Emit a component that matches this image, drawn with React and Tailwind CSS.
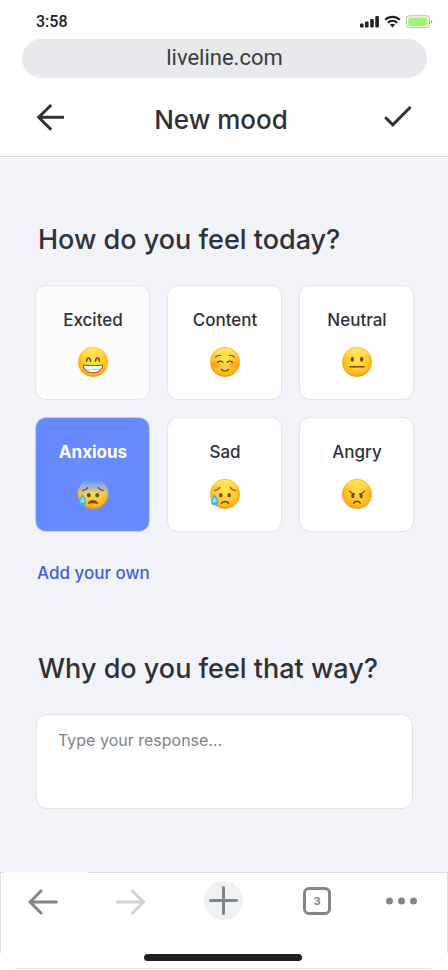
import { useState } from "react";

function Face({ children, id, mid = "#ffcb2b", brow }) {
  return (
    <svg viewBox="0 0 30 30" className="h-[30px] w-[30px]" aria-hidden="true">
      <defs>
        <radialGradient id={id} cx="0.5" cy="0.42" r="0.6">
          <stop offset="0" stopColor="#ffe650" />
          <stop offset="0.6" stopColor={mid} />
          <stop offset="0.85" stopColor="#fdae1c" />
          <stop offset="1" stopColor="#ea860a" />
        </radialGradient>
        <linearGradient id={id + "-top"} x1="0" y1="0" x2="0" y2="1">
          {brow ? (
            <>
              <stop offset="0" stopColor="#4d8cf5" />
              <stop offset="0.2" stopColor="#8fa9e6" />
              <stop offset="0.38" stopColor="#b9b8b8" stopOpacity="0.8" />
              <stop offset="0.58" stopColor="#ffd24a" stopOpacity="0" />
            </>
          ) : (
            <>
              <stop offset="0" stopColor="#ffea6b" />
              <stop offset="0.35" stopColor="#ffea6b" stopOpacity="0" />
            </>
          )}
        </linearGradient>
      </defs>
      <circle cx="15" cy="15" r="15" fill={`url(#${id})`} />
      <circle cx="15" cy="15" r={brow ? "15" : "14"} fill={`url(#${id}-top)`} />
      {children}
    </svg>
  );
}

const BROWN = "#7a4609";

function Tear() {
  return (
    <g>
      <path d="M4.600 15c-1.500 3-3.600 5-3.600 7.700a3.600 3.600 0 0 0 7.200 0C8.200 20 6.100 18 4.600 15z" fill="#35b3f0" />
      <path d="M4.600 17.500c-.8 2-2.400 3.500-2.400 5.200a2.400 2.400 0 0 0 4.600 0c0-1.700-1.600-3.200-2.200-5.200z" fill="#8fe0ff" />
      <path d="M3.200 23.500c.6 1.300 2.400 1.300 3 0" stroke="#1b8fd8" strokeWidth="0.9" fill="none" />
    </g>
  );
}

function Excited() {
  return (
    <Face id="excited">
      <path d="M8.600 14.200c.2-4.300 3.700-4.300 4 0M17.400 14.200c.3-4.300 3.800-4.300 4 0" stroke={BROWN} strokeWidth="1.500" fill="none" strokeLinecap="round" />
      <path d="M5 17.500c6.500 1 13.500 1 20 0 .3 5-4.200 8.700-10 8.700S4.700 22.500 5 17.500z" fill="#7a4e22" />
      <path d="M5.900 18.400c6 .9 12.200.9 18.200 0-.1 4-4 6.800-9.100 6.800s-9-2.800-9.100-6.800z" fill="#fff" />
      <path d="M6.800 22.200c5.500.9 10.900.9 16.400 0" stroke="#a9a5a2" strokeWidth="0.700" fill="none" />
      <path d="M10.500 19v5.400M15 19.200v6M19.500 19v5.400" stroke="#d9d6d2" strokeWidth="0.500" fill="none" />
    </Face>
  );
}

function Content() {
  return (
    <Face id="content">
      <ellipse cx="6" cy="17.500" rx="4.500" ry="3.400" fill="#ff6b2c" opacity="0.35" />
      <ellipse cx="24" cy="17.500" rx="4.500" ry="3.400" fill="#ff6b2c" opacity="0.35" />
      <path d="M5.600 10c1.200-1.300 3-1.800 5-1.600M24.400 10c-1.200-1.300-3-1.800-5-1.600" stroke="#94560a" strokeWidth="1.200" fill="none" strokeLinecap="round" />
      <path d="M7.800 15.300c1.400-1.500 3.600-1.500 5 0M17.200 15.300c1.400-1.500 3.600-1.500 5 0" stroke={BROWN} strokeWidth="1.300" fill="none" strokeLinecap="round" />
      <path d="M11.400 22.400c1.800 2.300 5.400 2.300 7.200 0" stroke={BROWN} strokeWidth="1.400" fill="none" strokeLinecap="round" />
    </Face>
  );
}

function Neutral() {
  return (
    <Face id="neutral">
      <ellipse cx="10.300" cy="12.300" rx="1.600" ry="2.500" fill={BROWN} />
      <ellipse cx="19.700" cy="12.300" rx="1.600" ry="2.500" fill={BROWN} />
      <path d="M8 19.800h14" stroke={BROWN} strokeWidth="1.600" strokeLinecap="round" />
    </Face>
  );
}

function Anxious() {
  return (
    <Face id="anxious" brow>
      <path d="M4.500 11.500c2.500-.2 4.300-1.300 5.300-3.200M25.500 11.500c-2.500-.2-4.300-1.300-5.300-3.200" stroke="#55545c" strokeWidth="1.200" fill="none" strokeLinecap="round" />
      <ellipse cx="10.800" cy="16.200" rx="1.900" ry="2.200" fill={BROWN} />
      <ellipse cx="19.200" cy="16.200" rx="1.900" ry="2.200" fill={BROWN} />
      <path d="M10 24.600c.6-4.200 9.400-4.200 10 0-2.800-.9-7.200-.9-10 0z" fill={BROWN} stroke={BROWN} strokeLinejoin="round" strokeWidth="0.600" />
      <Tear />
    </Face>
  );
}

function Sad() {
  return (
    <Face id="sad">
      <path d="M4.300 11.500c2.500-.2 4.500-1.300 5.500-3.200M25.700 11.500c-2.500-.2-4.500-1.300-5.500-3.200" stroke="#94560a" strokeWidth="1.200" fill="none" strokeLinecap="round" />
      <ellipse cx="10.800" cy="16.300" rx="1.700" ry="2.200" fill={BROWN} />
      <ellipse cx="19.200" cy="16.300" rx="1.700" ry="2.200" fill={BROWN} />
      <path d="M11.500 24.400c1.200-2.700 5.800-2.700 7 0" stroke={BROWN} strokeWidth="1.500" fill="none" strokeLinecap="round" />
      <Tear />
    </Face>
  );
}

function Angry() {
  return (
    <Face id="angry" mid="#ffbf26">
      <ellipse cx="10.800" cy="16.900" rx="1.600" ry="2.300" fill={BROWN} />
      <ellipse cx="19.200" cy="16.900" rx="1.600" ry="2.300" fill={BROWN} />
      <path d="M7.500 12.200c1.700 2 3.300 2.800 5.300 3M22.500 12.200c-1.700 2-3.300 2.800-5.300 3" stroke={BROWN} strokeWidth="1.200" fill="none" strokeLinecap="round" />
      <path d="M11.700 24.200c1.400-2.700 5.200-2.700 6.600 0" stroke={BROWN} strokeWidth="1.400" fill="none" strokeLinecap="round" />
    </Face>
  );
}

const MOODS = [
  { name: "Excited", Icon: Excited, tone: "bg-[#fcfcfc]" },
  { name: "Content", Icon: Content, tone: "bg-white" },
  { name: "Neutral", Icon: Neutral, tone: "bg-white" },
  { name: "Anxious", Icon: Anxious, tone: "bg-white" },
  { name: "Sad", Icon: Sad, tone: "bg-white" },
  { name: "Angry", Icon: Angry, tone: "bg-white" },
];

function StatusBar() {
  return (
    <div className="flex h-[39px] items-center justify-between pt-[5px] pr-[15px] pl-9 font-[Roboto,sans-serif] text-base font-medium text-[#202124]">
      <span>3:58</span>
      <svg viewBox="0 0 73 14" className="h-[14px] w-[73px]" aria-hidden="true">
        <g fill="#202124">
          <rect x="0" y="8.500" width="3.600" height="4" rx="1" />
          <rect x="5" y="6.500" width="3.600" height="6" rx="1" />
          <rect x="10.200" y="4" width="3.600" height="8.500" rx="1" />
          <rect x="15.300" y="1" width="3.600" height="11.500" rx="1" />
          <path d="M32.500 12.500l-2.600-2.700c1.400-1.300 3.800-1.300 5.200 0z" />
        </g>
        <path d="M25.200 4.700c4.200-3.900 10.400-3.900 14.600 0M27.800 7.700c2.700-2.500 6.700-2.500 9.400 0" stroke="#202124" strokeWidth="2.200" fill="none" />
        <rect x="46.500" y="0.800" width="23" height="11.800" rx="3" fill="#fff" stroke="#b5b5b8" />
        <rect x="48.300" y="2.500" width="19.400" height="8.400" rx="1.500" fill="#99fa6f" />
        <path d="M71 4.800c1.700.6 1.700 3.200 0 3.800z" fill="#a5a5a8" />
      </svg>
    </div>
  );
}

export default function App() {
  const [selected, setSelected] = useState("Anxious");
  return (
    <div className="flex min-h-screen flex-col bg-[#f1f3f8] font-[Inter,sans-serif] text-[#303136]">
      <header className="border-b border-[#d5d8da] bg-white">
        <StatusBar />
        <div className="mr-[21px] ml-[22px] flex h-[39px] items-center justify-center rounded-full bg-[#e8e9ed] pb-[2px] font-[Roboto,sans-serif] text-[22px] leading-7 text-[#3a3b40]">
          liveline.com
        </div>
        <div className="flex h-[78px] items-center justify-between px-9">
          <button aria-label="Back">
            <svg viewBox="0 0 28 28" className="h-7 w-7" fill="none" stroke="currentColor" strokeWidth="3">
              <path d="M15.200 2L2.700 14.200l12.500 12.500M3 14.200h25" />
            </svg>
          </button>
          <h1 className="pt-1.5 pr-1.5 text-[26px] leading-8 font-medium">New mood</h1>
          <button aria-label="Save">
            <svg viewBox="0 0 28 28" className="h-7 w-7" fill="none" stroke="currentColor" strokeWidth="3">
              <path d="M1.200 14.300l7.600 7.500L26.500 4" />
            </svg>
          </button>
        </div>
      </header>

      <main className="flex-1 pt-[63px] pr-[34px] pb-[63px] pl-[35px]">
        <h2 className="pl-[3px] text-[27px] leading-10 font-medium">How do you feel today?</h2>
        <div className="mt-[25px] grid grid-cols-3 gap-[17px]">
          {MOODS.map(({ name, Icon, tone }) => (
            <button
              key={name}
              aria-pressed={selected === name}
              onClick={() => setSelected(name)}
              className={
                "flex h-[115px] flex-col items-center gap-[15px] rounded-[11px] border pt-[22px] pl-px text-[17px] leading-6 " +
                (selected === name
                  ? "border-[#c9cfe6] bg-[#678aff] font-bold text-white"
                  : "border-[#e4e5e6] font-medium " + tone)
              }
            >
              <span>{name}</span>
              <Icon />
            </button>
          ))}
        </div>
        <a href="#add" className="mt-[29px] ml-[2px] block w-fit text-[17px] leading-6 font-medium text-[#3f5fdc]">
          Add your own
        </a>
        <h2 className="mt-16 pl-[3px] text-[27px] leading-10 font-medium">
          <label htmlFor="reason">Why do you feel that way?</label>
        </h2>
        <textarea
          id="reason"
          placeholder="Type your response..."
          className="mt-[25px] ml-px block h-[95px] w-[calc(100%-2px)] resize-none rounded-[11px] border border-[#e0e2e3] bg-white px-[21px] py-[13px] text-base leading-6 outline-none placeholder:text-[#818286]"
        />
      </main>

      <nav aria-label="Browser" className="bg-white text-[#80868b]">
        <div className="flex h-px">
          <span className="w-1 bg-[#dcdde0]" />
          <span className="w-[84px]" />
          <span className="flex-1 bg-[#dcdde0]" />
        </div>
        <div className="flex h-20 items-start justify-between border-x border-[#dedfe1] pt-2 pr-[30px] pl-[27px]">
          <div className="flex items-center gap-[58px]">
            <button aria-label="Previous page">
              <svg viewBox="0 0 30 30" className="h-[30px] w-[30px]" fill="none" stroke="currentColor" strokeWidth="3" strokeLinecap="round">
                <path d="M13 5L2 16l11 11M3 16h25.500" />
              </svg>
            </button>
            <button aria-label="Next page" className="text-[#d2d2d2]">
              <svg viewBox="0 0 30 30" className="h-[30px] w-[30px]" fill="none" stroke="currentColor" strokeWidth="3" strokeLinecap="round">
                <path d="M16.500 5l11 11-11 11M26.500 16H1.500" />
              </svg>
            </button>
            <button aria-label="New tab" className="rounded-full bg-[#f0f1f3]">
              <svg viewBox="0 0 39 39" className="h-[39px] w-[39px]" fill="none" stroke="currentColor" strokeWidth="3" strokeLinecap="round">
                <path d="M19.500 6.500v26M6.500 19.500h26" />
              </svg>
            </button>
          </div>
          <div className="flex h-10 items-center gap-[55px]">
            <button aria-label="3 open tabs" className="flex h-7 w-7 items-center justify-center rounded-md border-[3px] border-[#80868b] text-[11px] leading-4 font-bold">
              3
            </button>
            <button aria-label="More">
              <svg viewBox="0 0 31 8" className="h-2 w-[31px]" fill="currentColor">
                <circle cx="3.500" cy="4" r="3.500" />
                <circle cx="15.500" cy="4" r="3.500" />
                <circle cx="27.500" cy="4" r="3.500" />
              </svg>
            </button>
          </div>
        </div>
        <div className="flex h-[17px] flex-col items-center justify-between pr-[17px] pb-px pl-[15px]">
          <span className="mt-px h-[7px] w-[158px] rounded-full bg-[#202124]" />
          <span className="h-px w-full bg-[#e6e7e9]" />
        </div>
      </nav>
    </div>
  );
}
